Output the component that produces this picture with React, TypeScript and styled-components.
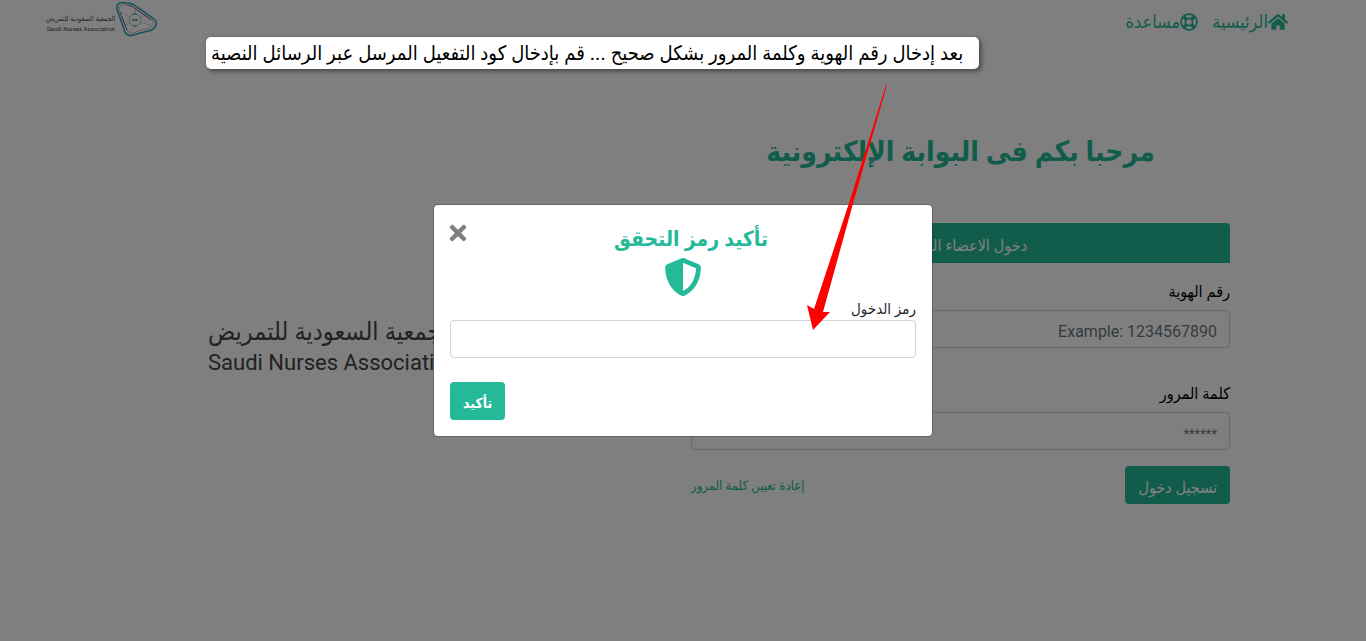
import React from 'react';
import styled, { createGlobalStyle } from 'styled-components';
import { FaHome, FaRegLifeRing, FaShieldAlt, FaTimes } from 'react-icons/fa';

const GREEN = '#24b999';
const BODY_FONT = "Roboto, 'DejaVu Sans Condensed', 'DejaVu Sans', sans-serif";

const GlobalStyle = createGlobalStyle`
  *, *::before, *::after { box-sizing: border-box; }
  body {
    margin: 0;
    background: #fff;
    color: #212529;
    font-family: ${BODY_FONT};
    font-size: 16px;
    line-height: 24px;
  }
  button, input { font-family: inherit; }
`;

const Page = styled.div`
  position: relative;
  min-height: 100vh;
  overflow: hidden;
`;

const Navbar = styled.header`
  display: flex;
  justify-content: space-between;
  align-items: flex-start;
  padding: 0 78px 0 46px;
  height: 46px;
`;

const NavLinks = styled.nav`
  display: flex;
  gap: 14px;
  padding-top: 10px;
`;

const NavLink = styled.a`
  display: flex;
  align-items: center;
  color: ${GREEN};
  font-size: 18px;
  line-height: 24px;
  text-decoration: none;
`;

const Brand = styled.a`
  display: flex;
  direction: ltr;
  padding-top: 1px;
  color: #474747;
  text-decoration: none;
`;

const BrandText = styled.span`
  display: flex;
  flex-direction: column;
  align-items: flex-end;
  padding-top: 14px;
  font-size: 7px;
  line-height: 9px;
  white-space: nowrap;
`;

const BrandLatin = styled.span`
  font-size: 6px;
`;

const Main = styled.main`
  display: grid;
  grid-template-columns: 1fr 1fr;
  gap: 16px;
  max-width: 1094px;
  margin: 0 auto;
  padding-top: 82px;
`;

const FormColumn = styled.section`
  display: flex;
  flex-direction: column;
`;

const Welcome = styled.h1`
  margin: 0 0 47px;
  color: ${GREEN};
  font-size: 28px;
  line-height: 48px;
  font-weight: 700;
  text-align: center;
  white-space: nowrap;
`;

const Tab = styled.button`
  height: 40px;
  padding: 4px 16px 0;
  border: 0;
  border-radius: 4px 4px 0 0;
  background: ${GREEN};
  color: #fff;
  font-size: 16px;
`;

const Field = styled.div<{ $space: number; $gap: number }>`
  display: flex;
  flex-direction: column;
  gap: ${(p) => p.$gap}px;
  margin-top: ${(p) => p.$space}px;
`;

const Label = styled.label`
  color: #000;
  font-size: 16px;
  line-height: 24px;
`;

const CodeLabel = styled(Label)`
  color: #212529;
  font-size: 15px;
  line-height: 22px;
`;

const TextInput = styled.input`
  width: 100%;
  height: 38px;
  padding: 8px 12px 4px;
  border: 1px solid #ced4da;
  border-radius: 4px;
  background: #fff;
  color: #495057;
  font-size: 16px;
  &::placeholder { color: #6c757d; opacity: 1; }
  &[type='password'] { font-size: 13px; }
`;

const FormActions = styled.div`
  display: flex;
  justify-content: space-between;
  align-items: center;
  margin-top: 16px;
`;

const Button = styled.button<{ $bold?: boolean }>`
  height: 38px;
  padding: 4px 13px 0;
  border: 0;
  border-radius: 4px;
  background: ${GREEN};
  color: #fff;
  font-size: ${(p) => (p.$bold ? 14 : 16)}px;
  font-weight: ${(p) => (p.$bold ? 700 : 400)};
  white-space: nowrap;
`;

const ResetLink = styled.a`
  padding-top: 2px;
  color: ${GREEN};
  font-size: 13px;
  text-decoration: none;
`;

const LogoColumn = styled.section`
  direction: ltr;
  padding: 160px 0 0 72px;
`;

const LargeLogo = styled.div`
  display: flex;
  align-items: center;
  gap: 8px;
  color: #444;
`;

const LargeLogoText = styled.div`
  display: flex;
  flex-direction: column;
  align-items: flex-start;
  padding-top: 10px;
  font-size: 25px;
  line-height: 31px;
  white-space: nowrap;
`;

const LargeLatin = styled.span`
  font-size: 22px;
`;

const Backdrop = styled.div`
  position: absolute;
  inset: 0;
  display: flex;
  align-items: center;
  justify-content: center;
  background: rgba(0, 0, 0, 0.5);
`;

const Modal = styled.form`
  width: 500px;
  max-width: 100%;
  padding: 16px;
  border: 1px solid rgba(0, 0, 0, 0.2);
  border-radius: 5px;
  background: #fff;
  background-clip: padding-box;
`;

const ModalHeader = styled.div`
  display: flex;
  align-items: flex-start;
`;

const ModalTitle = styled.h2`
  flex: 1;
  margin: 0;
  color: ${GREEN};
  font-size: 21px;
  line-height: 36px;
  font-weight: 700;
  text-align: center;
`;

const CloseButton = styled.button`
  display: flex;
  justify-content: center;
  width: 16px;
  padding: 0;
  border: 0;
  background: none;
  color: #808080;
  svg { flex-shrink: 0; }
`;

const ShieldRow = styled.div`
  display: flex;
  justify-content: center;
  padding: 1px 0 2px;
  color: ${GREEN};
`;

const ModalFooter = styled.div`
  display: flex;
  justify-content: flex-end;
  margin-top: 24px;
`;

const Callout = styled.p`
  position: absolute;
  top: 37px;
  left: 206px;
  margin: 0;
  padding: 0 16px 0 5px;
  border-radius: 5px;
  background: #fff;
  box-shadow: 2px 2px 5px rgba(0, 0, 0, 0.5);
  color: #000;
  font-size: 20px;
  line-height: 32px;
  white-space: nowrap;
`;

const Arrow = styled.svg`
  position: absolute;
  top: 84px;
  left: 800px;
`;

const Emblem = ({ width, height }: { width: number; height: number }) => (
  <svg width={width} height={height} viewBox="0 0 42 36" fill="none" aria-hidden="true">
    <path d="M3 3Q5 1 12 2Q18 2 22 6L39 18Q43 22 40 26Q37 30 29 31L18 34Q13 36 10 31L3 11Q1 6 3 3Z" stroke="#2aa6b8" strokeWidth="1.6" />
    <path d="M5 5Q7 3 12 4Q17 4 21 8L37 19Q40 22 37 25Q34 28 27 29L18 32Q14 33 12 29L5 11Q3 7 5 5Z" stroke="#c79a6b" strokeWidth=".7" />
    <path d="M12 4Q17 4 21 8L36 19M12 29L5 11" stroke="#7656a8" strokeWidth=".9" />
    <path d="M7 12L15 16M20 8L20 13M26 21L35 24M15 31L19 26M13 23L10 24M28 15L25 17" stroke="#aaa" strokeWidth=".5" />
    <circle cx="20" cy="19" r="6" stroke="#4b9fab" strokeWidth=".6" />
    <path d="M18 14L20 12L22 14M18 24L20 26L22 24" stroke="#28a99b" />
    <path d="M17 18.5H23M17 19.5H23" stroke="#555" strokeWidth=".8" strokeDasharray="1.5 .6" />
  </svg>
);

export default function App() {
  return (
    <Page dir="rtl" lang="ar">
      <GlobalStyle />
      <Navbar>
        <NavLinks>
          <NavLink href="#home"><FaHome size={20} />الرئيسية</NavLink>
          <NavLink href="#help"><FaRegLifeRing size={18} />مساعدة</NavLink>
        </NavLinks>
        <Brand href="#home">
          <BrandText>
            <span dir="rtl">الجمعية السعودية للتمريض</span>
            <BrandLatin>Saudi Nurses Association</BrandLatin>
          </BrandText>
          <Emblem width={42} height={36} />
        </Brand>
      </Navbar>

      <Main>
        <FormColumn>
          <Welcome>مرحبا بكم فى البوابة الإلكترونية</Welcome>
          <Tab type="button">دخول الاعضاء العاملين</Tab>
          <Field $space={17} $gap={6}>
            <Label htmlFor="identity">رقم الهوية</Label>
            <TextInput id="identity" placeholder="Example: 1234567890" />
          </Field>
          <Field $space={34} $gap={6}>
            <Label htmlFor="password">كلمة المرور</Label>
            <TextInput id="password" type="password" placeholder="******" />
          </Field>
          <FormActions>
            <Button type="button">تسجيل دخول</Button>
            <ResetLink href="#reset">إعادة تعيين كلمة المرور</ResetLink>
          </FormActions>
        </FormColumn>
        <LogoColumn>
          <LargeLogo>
            <LargeLogoText>
              <span dir="rtl">الجمعية السعودية للتمريض</span>
              <LargeLatin>Saudi Nurses Association</LargeLatin>
            </LargeLogoText>
            <Emblem width={126} height={108} />
          </LargeLogo>
        </LogoColumn>
      </Main>

      <Backdrop>
        <Modal role="dialog" aria-modal="true" aria-labelledby="verify-title">
          <ModalHeader>
            <ModalTitle id="verify-title">تأكيد رمز التحقق</ModalTitle>
            <CloseButton type="button" aria-label="إغلاق"><FaTimes size={24} /></CloseButton>
          </ModalHeader>
          <ShieldRow><FaShieldAlt size={38} /></ShieldRow>
          <Field $space={0} $gap={0}>
            <CodeLabel htmlFor="code">رمز الدخول</CodeLabel>
            <TextInput id="code" />
          </Field>
          <ModalFooter>
            <Button type="button" $bold>تأكيد</Button>
          </ModalFooter>
        </Modal>
      </Backdrop>

      <Callout>بعد إدخال رقم الهوية وكلمة المرور بشكل صحيح ... قم بإدخال كود التفعيل المرسل عبر الرسائل النصية</Callout>
      <Arrow width="90" height="248" viewBox="0 0 90 248" aria-hidden="true">
        <path d="M86 1H87L54 116L23 228L30 228L13 246L7 221L14 225L50 116Z" fill="#f00" />
      </Arrow>
    </Page>
  );
}
